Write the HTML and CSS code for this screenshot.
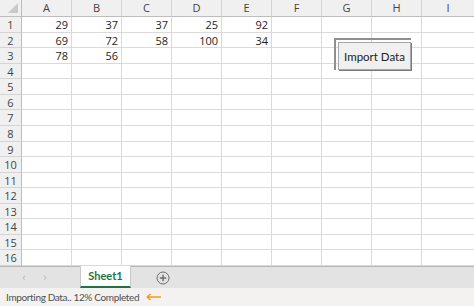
FILE: index.html
```html
<!DOCTYPE html>
<html lang="en">
<head>
<meta charset="UTF-8" />
<title>Import Data</title>
<link rel="stylesheet" href="styles.css">
</head>
<body>

<!-- Sheet grid -->
<div id="sheet">
  <div class="corner"><span class="tri"></span></div>
  <div class="colHead">A</div>
  <div class="colHead">B</div>
  <div class="colHead">C</div>
  <div class="colHead">D</div>
  <div class="colHead">E</div>
  <div class="colHead">F</div>
  <div class="colHead">G</div>
  <div class="colHead">H</div>
  <div class="colHead last">I</div>
</div>

<!-- Import button (floats over the cells) -->
<div id="importFrame">
  <button id="importBtn">Import Data</button>
</div>

<!-- Sheet tabs -->
<div id="tabBar">
  <span class="nav">&#8249;</span>
  <span class="nav">&#8250;</span>
  <div class="tab">Sheet1</div>
  <span class="addSheet">
    <svg width="14" height="14" viewBox="0 0 14 14">
      <circle cx="7" cy="7" r="6" fill="none" stroke="#6d6d6d" stroke-width="1"/>
      <path d="M7 3.8v6.4M3.8 7h6.4" stroke="#6d6d6d" stroke-width="1.4"/>
    </svg>
  </span>
</div>

<!-- Status bar -->
<div id="statusBar">
  <span id="statusText">Importing Data.. 12% Completed</span>
  <svg class="arrow" width="15" height="8" viewBox="0 0 15 8">
    <path d="M1 4h14M1 4l3.5-3M1 4l3.5 3" stroke="#f39c12" stroke-width="1.6" fill="none"/>
  </svg>
</div>

<script>
  var data = [
    [29, 37, 37, 25, 92],
    [69, 72, 58, 100, 34],
    [78, 56]
  ];
  var sheet = document.getElementById('sheet');
  for (var r = 0; r < 16; r++) {
    var head = document.createElement('div');
    head.className = 'rowHead';
    head.textContent = r + 1;
    sheet.appendChild(head);
    for (var c = 0; c < 9; c++) {
      var cell = document.createElement('div');
      cell.className = 'cell' + (c == 8 ? ' last' : '');
      var row = data[r] || [];
      if (row[c] !== undefined) cell.textContent = row[c];
      sheet.appendChild(cell);
    }
  }
</script>

</body>
</html>
```

FILE: styles.css
```css
body {
  margin: 0;
  width: 474px;
  height: 306px;
  overflow: hidden;
  background: #fff;
  font-family: "Open Sans", "Noto Sans", sans-serif;
  position: relative;
}

/* Grid */
#sheet {
  display: grid;
  grid-template-columns: 22px repeat(8, 50px) 52px;
  grid-template-rows: 17px repeat(16, 15.5625px);
  height: 266px;
}
#sheet div {
  box-sizing: border-box;
}
.corner {
  background: #f0f0f0;
  border-right: 1px solid #bdbdbd;
  border-bottom: 1px solid #bdbdbd;
  position: relative;
}
.corner .tri {
  position: absolute;
  right: 3px;
  bottom: 3px;
  width: 0; height: 0;
  border-left: 10px solid transparent;
  border-bottom: 10px solid #c9c9c9;
}
.colHead {
  background: #f0f0f0;
  color: #444;
  font-size: 11px;
  text-align: center;
  line-height: 16px;
  border-right: 1px solid #d4d4d4;
  border-bottom: 1px solid #bdbdbd;
}
.colHead.last, .cell.last {
  border-right: none;
}
.rowHead {
  background: #f0f0f0;
  color: #444;
  font-size: 11px;
  text-align: center;
  line-height: 15px;
  border-right: 1px solid #bdbdbd;
  border-bottom: 1px solid #d4d4d4;
}
.cell {
  border-right: 1px solid #dadada;
  border-bottom: 1px solid #dadada;
  font-size: 11px;
  color: #1e1e1e;
  text-align: right;
  padding-right: 3px;
  line-height: 15px;
}

/* Import button */
#importFrame {
  position: absolute;
  left: 334px;
  top: 38px;
  width: 77px;
  height: 32px;
  border-top: 2px solid #8f8f8f;
  border-left: 2px solid #8f8f8f;
  padding: 2px 0 0 2px;
  box-sizing: border-box;
}
#importBtn {
  display: block;
  width: 100%;
  height: 100%;
  margin: 0;
  background: #f0f0f0;
  border: 1px solid #a8a8a8;
  box-shadow: 1px 1px 0 #7a7a7a;
  font-family: Lato, "Open Sans", sans-serif;
  font-size: 11.5px;
  color: #222;
  padding: 0;
}

/* Tabs */
#tabBar {
  height: 22px;
  background: #e3e3e3;
  border-top: 1px solid #b6b6b6;
  box-sizing: border-box;
  display: flex;
  align-items: stretch;
  font-family: Lato, "Open Sans", sans-serif;
}
#tabBar .nav {
  color: #b5b5b5;
  font-size: 12px;
  line-height: 20px;
  width: 10px;
  text-align: center;
}
#tabBar .nav:first-child {
  margin-left: 19px;
}
#tabBar .nav + .nav {
  margin-left: 11px;
}
.tab {
  margin-left: 30px;
  margin-top: -1px;
  width: 51px;
  background: #fff;
  color: #217346;
  font-size: 11px;
  font-weight: bold;
  text-align: center;
  line-height: 19px;
  border-bottom: 2px solid #217346;
  border-left: 1px solid #c8c8c8;
  border-right: 1px solid #c8c8c8;
  box-sizing: border-box;
}
.addSheet {
  margin-left: 25px;
  display: flex;
  align-items: center;
}

/* Status */
#statusBar {
  height: 18px;
  background: #f3f2f1;
  display: flex;
  align-items: center;
  padding-left: 6px;
  font-family: Lato, "Open Sans", sans-serif;
  font-size: 10px;
  letter-spacing: -0.35px;
  color: #505050;
}
#statusBar .arrow {
  margin-left: 7px;
}
```
